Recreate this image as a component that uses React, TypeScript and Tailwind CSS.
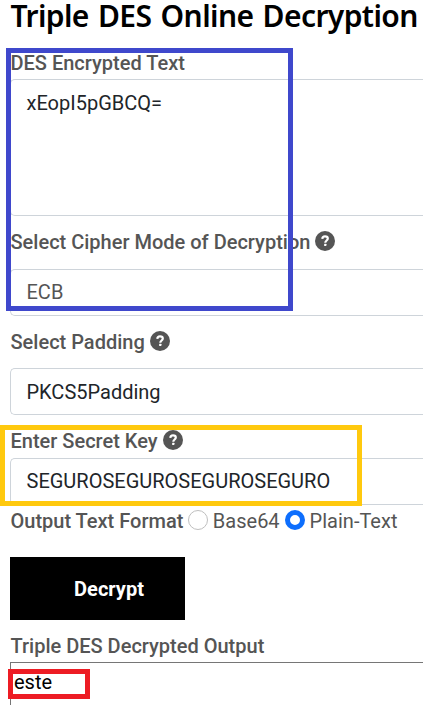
import type { ReactNode } from "react";

function Help() {
  return (
    <svg viewBox="0 0 20 20" className="mb-[3px] ml-[5px] h-5 w-5 shrink-0">
      <circle cx="10" cy="10" r="10" fill="#555" />
      <path d="M7.3 7.9C7.4 6.2 8.5 5.4 10 5.4c1.6 0 2.8.8 2.8 2.2 0 1.9-2.5 1.9-2.5 4.1" fill="none" stroke="#fff" strokeWidth="2.2" />
      <rect x="9.1" y="12.8" width="2.3" height="2.2" rx=".4" fill="#fff" />
    </svg>
  );
}

function Label({ children, help = false }: { children: ReactNode; help?: boolean }) {
  return (
    <div className="flex h-[30px] items-center pl-[0.5px] font-medium text-[#555]">
      <span>{children}</span>
      {help && <Help />}
    </div>
  );
}

export default function App() {
  return (
    <main className="relative h-[705px] w-[423px] overflow-hidden bg-white pl-[10px] font-[Roboto,sans-serif] text-[20px] leading-[30px] whitespace-nowrap text-[#212529]">
      <h1 className="h-[48px] pl-[0.5px] font-['Noto_Sans',sans-serif] text-[30px] leading-[31px] font-semibold tracking-[-0.6px] [word-spacing:2px] text-black">
        Triple DES Online Decryption
      </h1>
      <Label>DES Encrypted Text</Label>
      <div className="mt-px h-[137px] rounded-l-[5px] border border-r-0 border-[#ced4da] py-2 pl-[15.5px]">xEopI5pGBCQ=</div>
      <div className="mt-[11px]">
        <Label help>Select Cipher Mode of Decryption</Label>
      </div>
      <div className="mt-3 h-[47px] rounded-l-[5px] border border-r-0 border-[#ced4da] py-[7px] pl-[15.5px] text-[#555]">ECB</div>
      <div className="mt-[11px]">
        <Label help>Select Padding</Label>
      </div>
      <div className="mt-[11px] h-[47px] rounded-l-[5px] border border-r-0 border-[#ced4da] py-2 pl-[15.5px]">PKCS5Padding</div>
      <div className="mt-[11px]">
        <Label help>Enter Secret Key</Label>
      </div>
      <div className="mt-[2px] h-[47px] rounded-l-[5px] border border-r-0 border-[#ced4da] py-[7px] pl-[15.5px]">SEGUROSEGUROSEGUROSEGURO</div>
      <div className="mt-px flex h-[30px] items-center pl-[0.5px] text-[#555]">
        <span className="font-medium">Output Text Format</span>
        <span className="mr-[5px] mb-[2px] ml-[4.5px] h-5 w-5 shrink-0 rounded-full border border-[#bfbfbf]" />
        <span>Base64</span>
        <span className="mr-[5px] mb-[2px] ml-[5px] h-5 w-5 shrink-0 rounded-full border-[5px] border-[#0d6efd]" />
        <span>Plain-Text</span>
      </div>
      <button className="mt-[21px] block h-[63px] w-[175px] bg-black pl-[23px] font-bold text-white">Decrypt</button>
      <div className="mt-[11px]">
        <Label>Triple DES Decrypted Output</Label>
      </div>
      <div className="mt-px h-[60px] border border-r-0 border-[#767676] pt-[4px] pl-[3px] text-black">este</div>

      <div className="absolute top-[48px] left-[6px] h-[263px] w-[287px] border-[5px] border-[#3f48cc]" />
      <div className="absolute top-[425px] left-0 h-[81px] w-[362px] border-[5px] border-[#ffc90e]" />
      <div className="absolute top-[669px] left-[8px] h-[30px] w-[82px] border-[5px] border-[#ed1c24]" />
    </main>
  );
}
